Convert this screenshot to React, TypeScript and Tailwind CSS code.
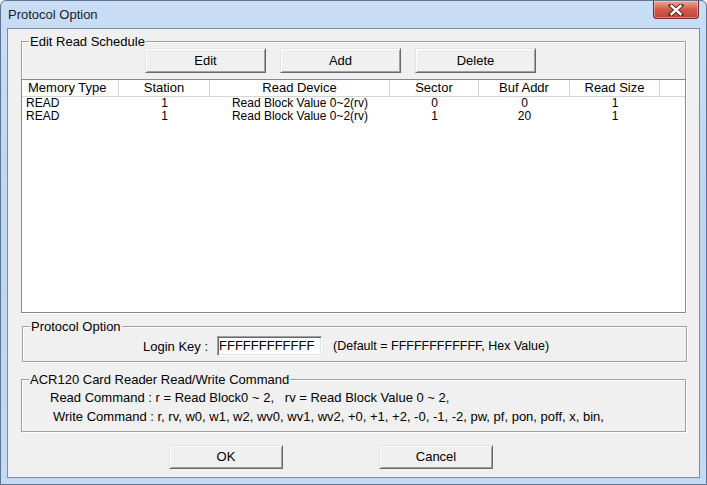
import React from "react"

const font = { fontFamily: '"Liberation Sans", Arial, sans-serif' }

const columns = [
  { label: "Memory Type", w: "w-[97px]", align: "left" },
  { label: "Station", w: "w-[91px]", align: "center" },
  { label: "Read Device", w: "w-[180px]", align: "center" },
  { label: "Sector", w: "w-[89px]", align: "center" },
  { label: "Buf Addr", w: "w-[91px]", align: "center" },
  { label: "Read Size", w: "w-[90px]", align: "center" },
]

const rows = [
  ["READ", "1", "Read Block Value 0~2(rv)", "0", "0", "1"],
  ["READ", "1", "Read Block Value 0~2(rv)", "1", "20", "1"],
]

// classic raised 3D push button
function PushButton({ label, className }: { label: string; className?: string }) {
  return (
    <div
      className={
        "flex items-center justify-center bg-[#f0f0f0] border border-t-[#e3e3e3] border-l-[#e3e3e3] border-b-[#696969] border-r-[#696969] shadow-[inset_1px_1px_0_#ffffff,inset_-1px_-1px_0_#a0a0a0] text-[13px] text-black " +
        (className ?? "")
      }
    >
      {label}
    </div>
  )
}

// etched group box with caption sitting on the top line
function GroupBox({
  caption,
  className,
  children,
}: {
  caption: string
  className?: string
  children?: React.ReactNode
}) {
  return (
    <div
      className={
        "relative border border-[#a0a0a0] shadow-[inset_1px_1px_0_#ffffff,1px_1px_0_#ffffff] " + (className ?? "")
      }
    >
      <span className="absolute left-[7px] top-[-8px] bg-[#f0f0f0] px-[1px] text-[13px] leading-[15px] text-black">
        {caption}
      </span>
      {children}
    </div>
  )
}

function CloseGlyph() {
  return (
    <svg width="16" height="12" viewBox="0 0 16 12">
      <path d="M3 1.5 L13 10.5 M13 1.5 L3 10.5" stroke="#4a2020" strokeWidth="4.2" strokeLinecap="square" />
      <path d="M3.5 2 L12.5 10 M12.5 2 L3.5 10" stroke="#ffffff" strokeWidth="2.4" strokeLinecap="square" />
    </svg>
  )
}

export default function App() {
  return (
    <div className="w-[707px] h-[485px] bg-[#f0f0f0]" style={font}>
      <div className="flex h-[485px] w-[707px] flex-col rounded-t-[6px] border border-[#5d7593] bg-gradient-to-b from-[#c9def5] via-[#bcd5f1] to-[#c3daf3]">
        {/* title bar */}
        <div className="flex h-[27px] shrink-0 items-start justify-between">
          <span className="pl-[7px] pt-[6px] text-[13px] leading-[15px] text-[#1a1a2e]">Protocol Option</span>
          <div className="mr-[7px] flex h-[18px] w-[46px] items-center justify-center rounded-b-[4px] border border-t-0 border-[#6b2b2b] bg-gradient-to-b from-[#e9a99a] via-[#cf5a48] to-[#c4443a] shadow-[inset_0_0_0_1px_rgba(255,255,255,0.35)]">
            <CloseGlyph />
          </div>
        </div>

        {/* client area */}
        <div className="mx-[6px] h-[450px] border border-[#7a8ca4] bg-[#f0f0f0]">
          <div className="flex h-[448px] flex-col">
            {/* Edit Read Schedule */}
            <GroupBox caption="Edit Read Schedule" className="ml-[13px] mt-[12px] h-[272px] w-[665px]">
              <div className="flex flex-col">
                <div className="flex gap-[14px] pl-[123px] pt-[6px]">
                  <PushButton label="Edit" className="h-[25px] w-[121px]" />
                  <PushButton label="Add" className="h-[25px] w-[121px]" />
                  <PushButton label="Delete" className="h-[25px] w-[121px]" />
                </div>
                <div className="mx-[-1px] mt-[6px] h-[234px] border border-[#828790] bg-white">
                  <div className="flex h-[17px] border-b border-[#d5d5d5] bg-white">
                    {columns.map((c) => (
                      <div
                        key={c.label}
                        className={
                          "h-[16px] shrink-0 border-r border-[#d5d5d5] text-[13px] leading-[16px] text-black " +
                          c.w +
                          (c.align === "left" ? " pl-[6px] text-left" : " text-center")
                        }
                      >
                        {c.label}
                      </div>
                    ))}
                  </div>
                  {rows.map((r, i) => (
                    <div key={i} className="flex h-[13px]">
                      {r.map((v, j) => (
                        <div
                          key={j}
                          className={
                            "shrink-0 text-[12px] leading-[13px] text-black " +
                            columns[j].w +
                            (j === 0 ? " pl-[4px] text-left" : " text-center")
                          }
                        >
                          {v}
                        </div>
                      ))}
                    </div>
                  ))}
                </div>
              </div>
            </GroupBox>

            {/* Protocol Option */}
            <GroupBox caption="Protocol Option" className="ml-[14px] mt-[13px] h-[36px] w-[665px]">
              <div className="flex items-center pl-[120px] pt-[9px]">
                <span className="text-[13px] leading-[15px] text-black">Login Key :</span>
                <div className="ml-[9px] flex h-[20px] w-[105px] items-center border border-t-[#a0a0a0] border-l-[#a0a0a0] border-b-white border-r-white bg-white pl-[1px] shadow-[inset_1px_1px_0_#696969,inset_-1px_-1px_0_#e3e3e3] text-[13px] text-black">
                  FFFFFFFFFFFF
                </div>
                <span className="ml-[11px] text-[12.5px] leading-[15px] text-black">
                  (Default = FFFFFFFFFFFF, Hex Value)
                </span>
              </div>
            </GroupBox>

            {/* ACR120 commands */}
            <GroupBox caption="ACR120 Card Reader Read/Write Command" className="ml-[13px] mt-[17px] h-[53px] w-[665px]">
              <div className="flex flex-col pt-[8px] text-[13px] leading-[19px] text-black">
                <span className="pl-[28px] whitespace-pre">
                  {"Read Command : r = Read Block0 ~ 2,   rv = Read Block Value 0 ~ 2,"}
                </span>
                <span className="pl-[31px] whitespace-pre">
                  {"Write Command : r, rv, w0, w1, w2, wv0, wv1, wv2, +0, +1, +2, -0, -1, -2, pw, pf, pon, poff, x, bin,"}
                </span>
              </div>
            </GroupBox>

            {/* dialog buttons */}
            <div className="mt-[13px] flex">
              <PushButton label="OK" className="ml-[161px] h-[24px] w-[114px]" />
              <PushButton label="Cancel" className="ml-[96px] h-[24px] w-[114px]" />
            </div>
          </div>
        </div>
      </div>
    </div>
  )
}
